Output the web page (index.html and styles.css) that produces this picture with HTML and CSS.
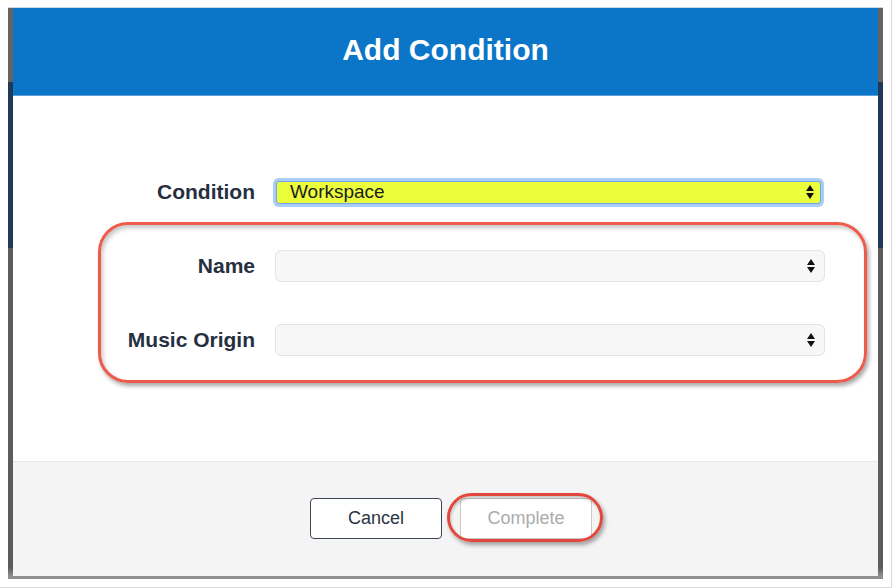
FILE: index.html
```html
<!DOCTYPE html>
<html lang="en">
<head>
  <meta charset="UTF-8">
  <title>Add Condition</title>
  <link rel="stylesheet" href="styles.css">
</head>
<body>
  <div class="shot">
    <div class="backdrop">
      <div class="modal">
        <div class="modal-header">
          <h2>Add Condition</h2>
        </div>

        <div class="modal-body">
          <div class="row">
            <label>Condition</label>
            <div class="select focus">
              <span>Workspace</span>
              <svg class="arrows" width="8" height="14" viewBox="0 0 8 14"><path d="M4 0 L8 6 L0 6 Z M0 8 L8 8 L4 14 Z" fill="#111"/></svg>
            </div>
          </div>
          <div class="row">
            <label>Name</label>
            <div class="select">
              <span></span>
              <svg class="arrows" width="8" height="14" viewBox="0 0 8 14"><path d="M4 0 L8 6 L0 6 Z M0 8 L8 8 L4 14 Z" fill="#111"/></svg>
            </div>
          </div>
          <div class="row">
            <label>Music Origin</label>
            <div class="select">
              <span></span>
              <svg class="arrows" width="8" height="14" viewBox="0 0 8 14"><path d="M4 0 L8 6 L0 6 Z M0 8 L8 8 L4 14 Z" fill="#111"/></svg>
            </div>
          </div>

          <!-- red highlight drawn over the two new fields -->
          <div class="callout"></div>
        </div>

        <div class="modal-footer">
          <button class="btn">Cancel</button>
          <span class="circled"><button class="btn disabled">Complete</button></span>
        </div>
      </div>
    </div>
  </div>
</body>
</html>
```

FILE: styles.css
```css
* {
  box-sizing: border-box;
}

body {
  margin: 0;
  background: #fff;
  font-family: 'Liberation Sans', Arial, sans-serif;
}

.shot {
  width: 892px;
  height: 588px;
  padding: 8px 0 0 8px;
  border-right: 1px solid #d9d9d9;
  border-bottom: 1px solid #d9d9d9;
  border-top: 0;
}

.backdrop {
  width: 875px;
  height: 571px;
  padding: 0 5px 3px;
  background: linear-gradient(to bottom, #646464 0, #646464 74px, #1e3a58 74px, #1e3a58 240px, #5c5c5c 240px, #5c5c5c 560px, #8f8f8f 568px);
  box-shadow: 0 -1px 0 #c9d9ea;
}

.modal {
  width: 865px;
  height: 568px;
  background: #fff;
  display: flex;
  flex-direction: column;
}

.modal-header {
  height: 88px;
  background: #0b75c7;
  border-bottom: 1px solid #5d9fdb;
  display: flex;
  align-items: center;
  justify-content: center;
  padding-bottom: 4px;
}

.modal-header h2 {
  margin: 0;
  color: #fff;
  font-size: 30px;
  font-weight: bold;
}

.modal-body {
  position: relative;
  height: 365px;
  padding-top: 59px;
}

.row {
  display: flex;
  align-items: center;
  height: 74px;
}

.row label {
  width: 242px;
  text-align: right;
  font-size: 21px;
  font-weight: bold;
  color: #262f40;
  margin-right: 20px;
}

.select {
  width: 550px;
  height: 32px;
  display: flex;
  align-items: center;
  justify-content: space-between;
  padding: 0 9px 0 13px;
  background: #f7f7f7;
  border: 1px solid #e3e3e3;
  border-radius: 6px;
  font-size: 19px;
  color: #1d1d1d;
}

.select.focus {
  width: 545px;
  height: 23px;
  margin-left: 1px;
  padding: 0 6px 0 13px;
  background: #ebfd3b;
  border: 1px solid #6ea7e9;
  border-radius: 3px;
  box-shadow: 0 0 0 3px #a9cdf6;
}

.arrows {
  display: block;
}

.callout {
  position: absolute;
  left: 85px;
  top: 126px;
  width: 769px;
  height: 161px;
  border: 3px solid #ee5a4b;
  border-radius: 30px;
  box-shadow: 2px 3px 4px rgba(0, 0, 0, 0.35), inset 2px 3px 4px rgba(0, 0, 0, 0.22);
}

.modal-footer {
  flex: 1;
  background: #f4f4f4;
  border-top: 1px solid #e6e6e6;
  display: flex;
  justify-content: center;
  align-items: flex-start;
  gap: 18px;
  padding: 36px 0 0 11px;
}

.btn {
  width: 132px;
  height: 41px;
  background: #fff;
  border: 1.5px solid #3b4658;
  border-radius: 4px;
  font-family: 'Liberation Sans', Arial, sans-serif;
  font-size: 18px;
  color: #2b3444;
  padding: 0;
}

.btn.disabled {
  border: 1px solid #c9c9c9;
  color: #ababab;
}

.circled {
  position: relative;
  display: block;
}

.circled::after {
  content: "";
  position: absolute;
  top: -5px;
  left: -13px;
  right: -11px;
  bottom: -3px;
  border: 3px solid #e2473b;
  border-radius: 26px;
  box-shadow: 2px 3px 4px rgba(0, 0, 0, 0.35), inset 1px 2px 3px rgba(0, 0, 0, 0.2);
}
```
